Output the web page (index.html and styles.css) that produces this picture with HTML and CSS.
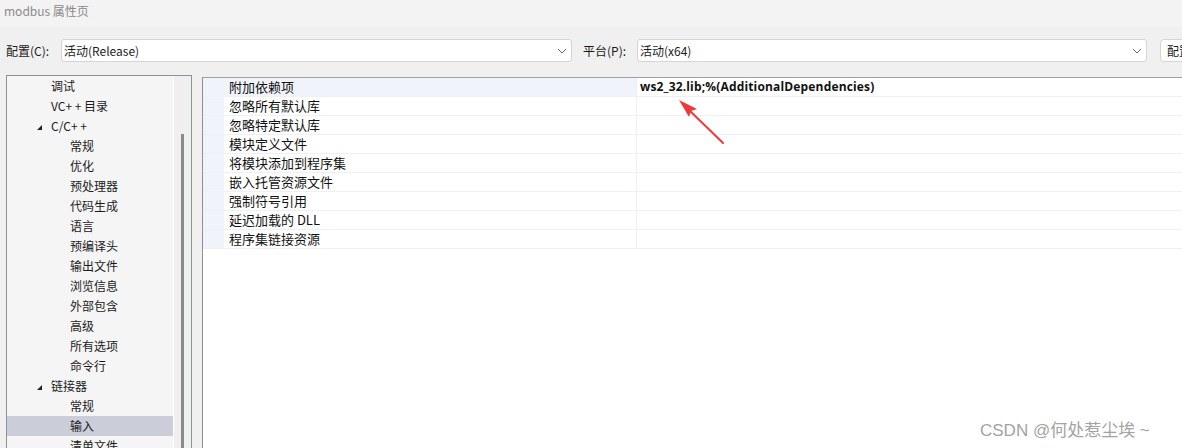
FILE: index.html
```html
<!DOCTYPE html>
<html lang="zh">
<head>
<meta charset="utf-8">
<title>modbus 属性页</title>
<link rel="stylesheet" href="styles.css">
</head>
<body>
<div class="titlebar">modbus 属性页</div>
<div class="toolbar">
  <span class="lbl">配置(C):</span>
  <div class="combo c1"><span>活动(Release)</span><svg class="chev" width="10" height="6" viewBox="0 0 10 6"><path d="M1 1 L5 5 L9 1" fill="none" stroke="#6a6a6a" stroke-width="1"/></svg></div>
  <span class="lbl lbl2">平台(P):</span>
  <div class="combo c2"><span>活动(x64)</span><svg class="chev" width="10" height="6" viewBox="0 0 10 6"><path d="M1 1 L5 5 L9 1" fill="none" stroke="#6a6a6a" stroke-width="1"/></svg></div>
  <div class="btn">配置管理器</div>
</div>
<div class="main">
  <div class="tree">
    <div class="tree-list">
      <div class="item l1">调试</div>
      <div class="item l1">VC+ + 目录</div>
      <div class="item l1 exp"><span class="tri"></span>C/C+ +</div>
      <div class="item l2">常规</div>
      <div class="item l2">优化</div>
      <div class="item l2">预处理器</div>
      <div class="item l2">代码生成</div>
      <div class="item l2">语言</div>
      <div class="item l2">预编译头</div>
      <div class="item l2">输出文件</div>
      <div class="item l2">浏览信息</div>
      <div class="item l2">外部包含</div>
      <div class="item l2">高级</div>
      <div class="item l2">所有选项</div>
      <div class="item l2">命令行</div>
      <div class="item l1 exp"><span class="tri"></span>链接器</div>
      <div class="item l2">常规</div>
      <div class="item l2 sel">输入</div>
      <div class="item l2">清单文件</div>
    </div>
    <div class="tree-sep"></div>
    <div class="tree-scroll"><div class="thumb"></div></div>
  </div>
  <div class="grid">
    <div class="row first"><div class="gm"></div><div class="name">附加依赖项</div><div class="value">ws2_32.lib;%(AdditionalDependencies)</div></div>
    <div class="row"><div class="gm"></div><div class="name">忽略所有默认库</div><div class="value"></div></div>
    <div class="row"><div class="gm"></div><div class="name">忽略特定默认库</div><div class="value"></div></div>
    <div class="row"><div class="gm"></div><div class="name">模块定义文件</div><div class="value"></div></div>
    <div class="row"><div class="gm"></div><div class="name">将模块添加到程序集</div><div class="value"></div></div>
    <div class="row"><div class="gm"></div><div class="name">嵌入托管资源文件</div><div class="value"></div></div>
    <div class="row"><div class="gm"></div><div class="name">强制符号引用</div><div class="value"></div></div>
    <div class="row"><div class="gm"></div><div class="name">延迟加载的 DLL</div><div class="value"></div></div>
    <div class="row"><div class="gm"></div><div class="name">程序集链接资源</div><div class="value"></div></div>
  </div>
</div>
<svg class="arrow" width="1182" height="448" viewBox="0 0 1182 448">
  <line x1="723" y1="143" x2="688" y2="109" stroke="#f03a3a" stroke-width="2" stroke-linecap="round"/>
  <path d="M679 100 L697 109 L691 111 L689 117 Z" fill="#f03a3a"/>
</svg>
<div class="watermark">CSDN @何处惹尘埃 ~</div>
</body>
</html>
```

FILE: styles.css
```css
html, body {
  margin: 0;
  padding: 0;
  width: 1182px;
  height: 448px;
  overflow: hidden;
}
body {
  background: #f0f0f0;
  font-family: "Noto Sans CJK SC", "Noto Sans", sans-serif;
  color: #1b1b1b;
  position: relative;
}
.titlebar {
  height: 26px;
  line-height: 22px;
  padding-left: 4px;
  font-size: 12px;
  color: #8a8a8a;
  background: #f3f3f3;
}
.toolbar {
  display: flex;
  align-items: center;
  height: 25px;
  margin-top: 12px;
  padding-left: 6px;
  font-size: 12px;
}
.lbl {
  width: 55px;
  flex: none;
  white-space: nowrap;
}
.lbl2 {
  margin-left: 11px;
  width: 54px;
}
.combo {
  flex: none;
  height: 23px;
  box-sizing: border-box;
  border: 1px solid #d5d5d5;
  border-radius: 3px;
  background: #fff;
  display: flex;
  align-items: center;
  justify-content: space-between;
  padding: 0 4px 0 2px;
}
.c1 { width: 511px; }
.c2 { width: 510px; }
.btn {
  flex: none;
  margin-left: 13px;
  width: 80px;
  height: 23px;
  box-sizing: border-box;
  border: 1px solid #d5d5d5;
  border-radius: 4px;
  background: #fff;
  line-height: 21px;
  padding-left: 6px;
  white-space: nowrap;
  overflow: hidden;
}
.main {
  display: flex;
  align-items: flex-start;
  margin-top: 12px;
}
.tree {
  flex: none;
  margin-left: 6px;
  width: 186px;
  height: 374px;
  box-sizing: border-box;
  border: 1px solid #8e9297;
  border-bottom: none;
  display: flex;
  background: #efefef;
  overflow: hidden;
}
.tree-list {
  width: 166px;
  background: #f5f5f5;
  font-size: 12px;
}
.tree-sep {
  width: 1px;
  background: #ffffff;
}
.tree-scroll {
  flex: 1;
  background: #efefef;
}
.thumb {
  margin-left: 7px;
  margin-top: 58px;
  width: 3px;
  height: 315px;
  background: #8a8a8a;
}
.item {
  height: 20px;
  line-height: 20px;
  white-space: nowrap;
  display: flex;
  align-items: center;
}
.l1 { padding-left: 44px; }
.l2 { padding-left: 63px; }
.exp { padding-left: 30px; }
.tri {
  width: 0;
  height: 0;
  border-left: 5px solid transparent;
  border-bottom: 5px solid #222;
  margin-right: 9px;
  margin-top: 2px;
}
.sel { background: #cbcdd9; }
.grid {
  flex: 1;
  margin-left: 10px;
  margin-top: 2px;
  height: 372px;
  background: #fff;
  border-left: 1px solid #8e9297;
  border-top: 1px solid #a0a0a0;
  font-size: 13px;
  color: #111;
}
.row {
  display: flex;
  height: 19px;
  box-sizing: border-box;
  border-bottom: 1px solid #edf1f7;
}
.gm {
  width: 21px;
  flex: none;
  background: #f0f4fa;
}
.name {
  width: 407px;
  flex: none;
  padding-left: 5px;
  line-height: 18px;
  border-right: 1px solid #edf1f7;
  white-space: nowrap;
}
.first .name { background: #f0f4fa; }
.value {
  flex: 1;
  padding-left: 3px;
  line-height: 18px;
  font-family: "Open Sans", "Noto Sans", sans-serif;
  font-weight: 700;
  font-size: 12px;
  letter-spacing: 0.16px;
  white-space: nowrap;
}
.arrow {
  position: absolute;
  left: 0;
  top: 0;
  pointer-events: none;
}
.watermark {
  position: absolute;
  left: 980px;
  top: 416px;
  font-family: "Liberation Sans", "Noto Sans CJK SC", sans-serif;
  font-size: 17px;
  color: #a3a3a3;
  text-shadow: 0 0 2px #fff, 0 0 2px #fff;
  white-space: nowrap;
}
```
